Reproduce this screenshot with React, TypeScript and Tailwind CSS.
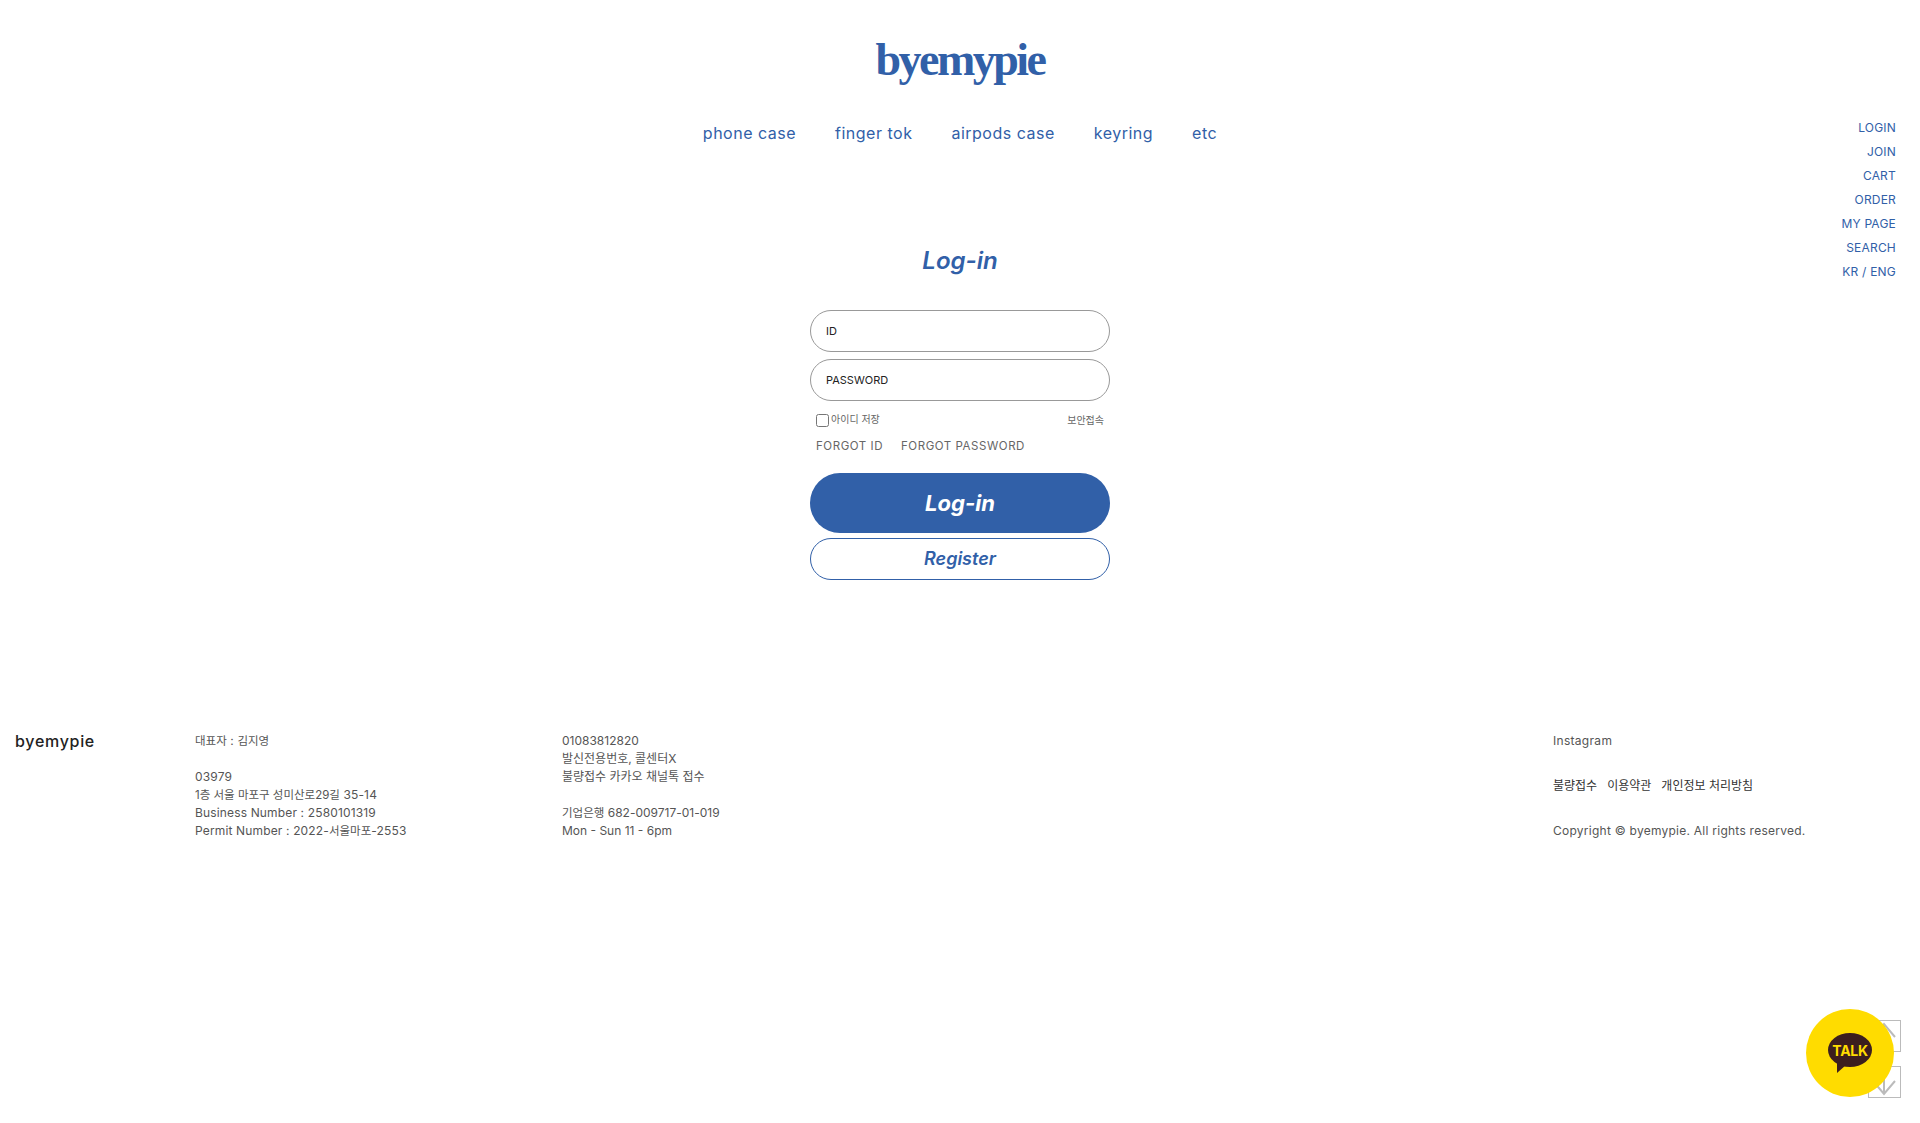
const sans = "font-['Inter','Noto_Sans_CJK_KR',sans-serif]";

const menu = ["phone case", "finger tok", "airpods case", "keyring", "etc"];
const sideMenu = ["LOGIN", "JOIN", "CART", "ORDER", "MY PAGE", "SEARCH", "KR / ENG"];

const Ko = ({ children }: { children: string }) => <span className="text-[11.5px] tracking-normal">{children}</span>;

const Footer = () => (
  <footer className="flex pl-[15px] pt-[152px] text-[12px] leading-[18px] text-[#555]">
    <div className="w-[180px] text-[16px] leading-[18px] font-medium tracking-[0.7px] text-[#222]">byemypie</div>
    <div className="w-[367px] tracking-[0.15px]">
      <p><Ko>대표자</Ko> : <Ko>김지영</Ko></p>
      <p className="mt-[18px]">03979</p>
      <p><Ko>1층 서울 마포구 성미산로29길</Ko> 35-14</p>
      <p>Business Number : 2580101319</p>
      <p>Permit Number : 2022-<Ko>서울마포</Ko>-2553</p>
    </div>
    <div className="w-[991px]">
      <p>01083812820</p>
      <p>발신전용번호, 콜센터X</p>
      <p>불량접수 카카오 채널톡 접수</p>
      <p className="mt-[18px]"><Ko>기업은행</Ko> 682-009717-01-019</p>
      <p>Mon - Sun 11 - 6pm</p>
    </div>
    <div className="tracking-[0.3px]">
      <p>Instagram</p>
      <div className="mt-[27px] flex gap-[10px] tracking-normal text-[#333]">
        <span>불량접수</span>
        <span>이용약관</span>
        <span>개인정보 처리방침</span>
      </div>
      <p className="mt-[27px] tracking-[0.25px]">Copyright © byemypie. All rights reserved.</p>
    </div>
  </footer>
);

const LoginForm = () => (
  <section className="mx-auto mt-[98px] w-[300px]">
    <h2 className="text-center text-[24px] leading-[36px] font-semibold italic text-[#3160a8]">Log-in</h2>
    <div className="mt-[31px] flex flex-col gap-[7px]">
      <input placeholder="ID" className="h-[42px] rounded-[21px] border border-[#999] px-[15px] text-[11px] placeholder:text-[#222] outline-none" />
      <input placeholder="PASSWORD" className="h-[42px] rounded-[21px] border border-[#999] px-[15px] text-[11px] placeholder:text-[#222] outline-none" />
    </div>
    <div className="mt-[11px] flex h-[16px] items-center justify-between px-[6px] text-[10px] leading-[16px] text-[#666]">
      <label className="flex items-center gap-[2px]">
        <input type="checkbox" className="h-[13px] w-[13px]" />
        <span className="-mt-[2px]">아이디 저장</span>
      </label>
      <span className="-mt-[1px]">보안접속</span>
    </div>
    <div className="mt-[10px] flex gap-[18px] px-[6px] text-[11.5px] leading-[16px] tracking-[0.55px] text-[#666]">
      <span>FORGOT ID</span>
      <span>FORGOT PASSWORD</span>
    </div>
    <button className="mt-[19px] block h-[60px] w-full rounded-[30px] bg-[#3160a8] text-[22px] font-bold italic text-white">Log-in</button>
    <button className="mt-[5px] block h-[42px] w-full rounded-[21px] border border-[#3160a8] pb-[1px] text-[18px] font-semibold italic text-[#3160a8]">Register</button>
  </section>
);

export default function App() {
  return (
    <div className={`relative h-[1123px] overflow-hidden bg-white ${sans}`}>
      <header className="pt-[30px]">
        <h1 className="text-center font-['Liberation_Serif',serif] text-[46px] leading-[60px] font-bold tracking-[-2.5px] text-[#3160a8]">byemypie</h1>
        <nav className="mt-[31px] flex justify-center gap-[39px] text-[16px] leading-[24px] tracking-[0.5px] text-[#3160a8]">
          {menu.map((m) => (
            <a key={m}>{m}</a>
          ))}
        </nav>
      </header>

      <ul className="absolute right-[24px] top-[116px] text-right text-[12px] leading-[24px] tracking-[0.2px] text-[#3160a8]">
        {sideMenu.map((m) => (
          <li key={m}>{m}</li>
        ))}
      </ul>

      <LoginForm />
      <Footer />

      <div className="absolute right-[19px] top-[1020px] h-[32px] w-[33px] border border-[#bbb] bg-white">
        <svg className="block" width="31" height="30" viewBox="0 0 31 30" fill="none" stroke="#bbb" strokeWidth="2"><path d="M4 16 15 3l11 13M15 3v27" /></svg>
      </div>
      <div className="absolute right-[19px] top-[1066px] h-[32px] w-[33px] border border-[#bbb] bg-white">
        <svg className="block" width="31" height="30" viewBox="0 0 31 30" fill="none" stroke="#bbb" strokeWidth="2"><path d="M4 14l11 13 11-13M15 27V0" /></svg>
      </div>
      <div className="absolute left-[1806px] top-[1009px] flex h-[88px] w-[88px] items-center justify-center rounded-full bg-[#ffdc00]">
        <div className="relative -mt-[6px] flex h-[34px] w-[44px] items-center justify-center rounded-[50%] bg-[#3c1e1e] text-[14px] font-bold tracking-[-0.3px] text-[#ffdc00]">
          TALK
          <svg className="absolute left-[8px] top-[29px]" width="10" height="11" viewBox="0 0 10 11"><path d="M1 0v11l9-8z" fill="#3c1e1e" /></svg>
        </div>
      </div>
    </div>
  );
}
